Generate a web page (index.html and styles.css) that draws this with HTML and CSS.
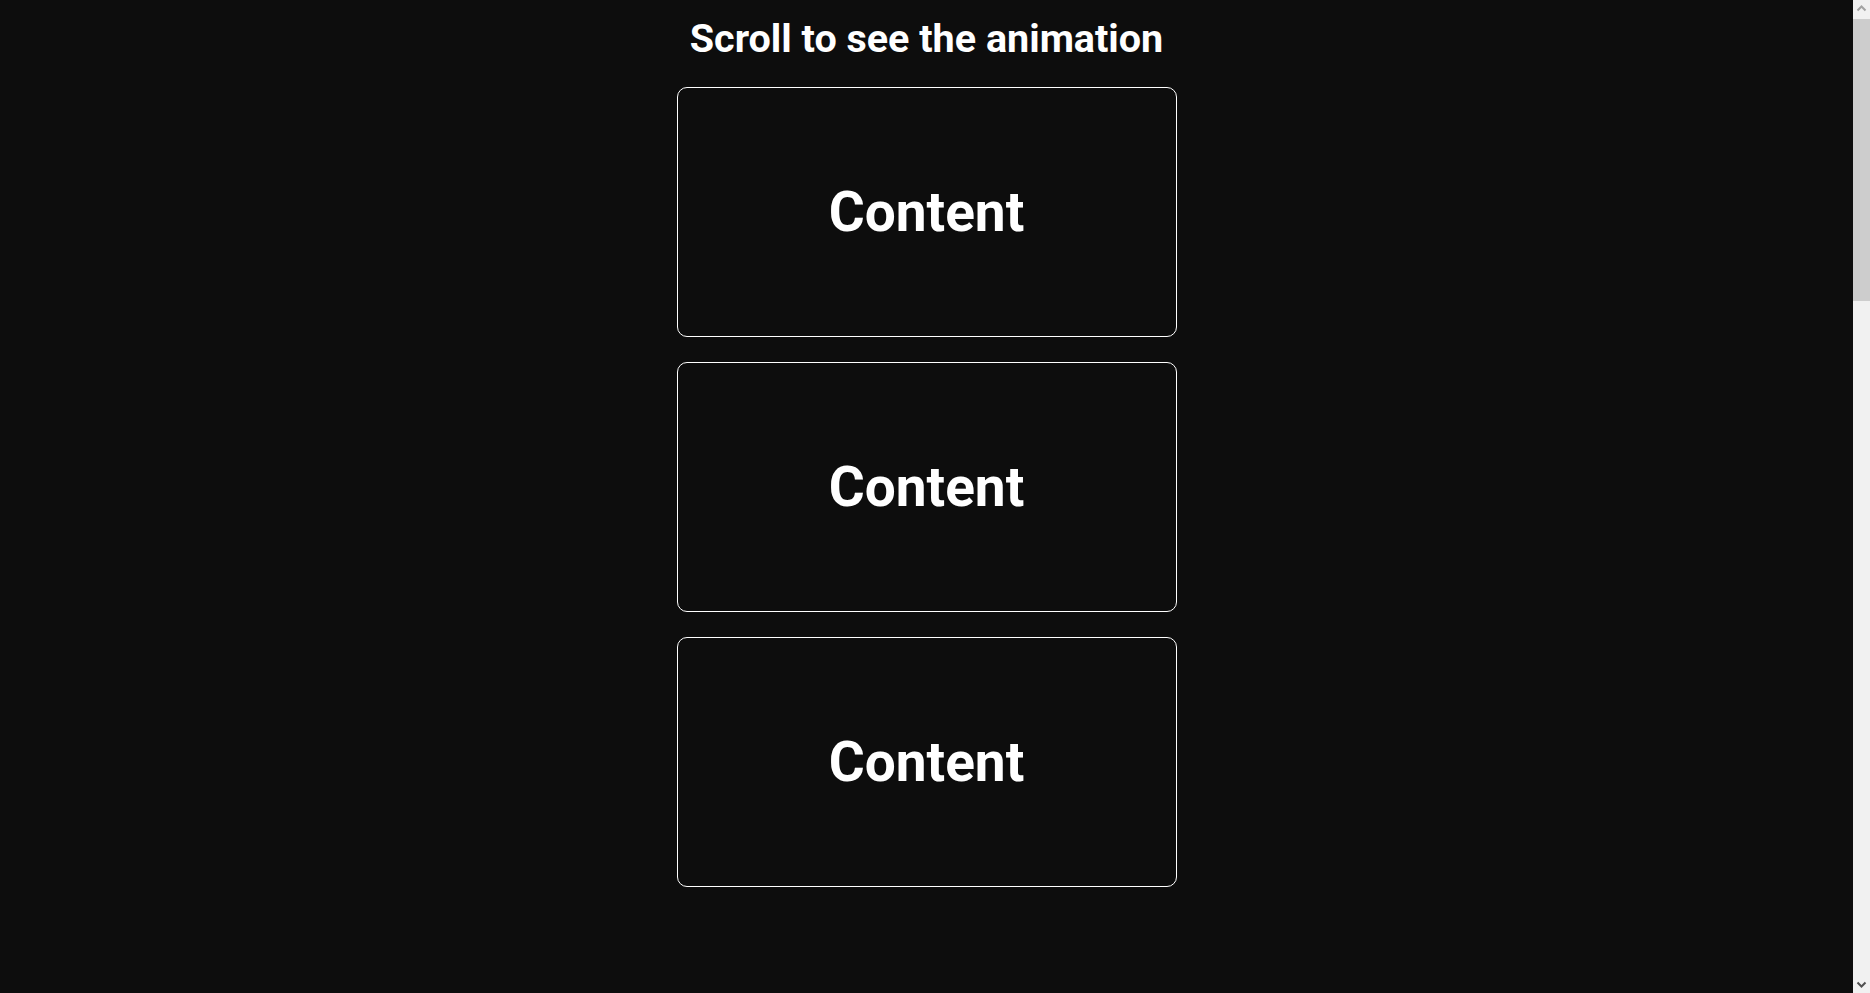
FILE: index.html
```html
<!DOCTYPE html>
<html lang="en">
<head>
<meta charset="utf-8">
<title>Scroll animation</title>
<link rel="stylesheet" href="styles.css">
</head>
<body>
<main class="page">
  <h1 class="title">Scroll to see the animation</h1>
  <section class="cards">
    <div class="card"><span class="card-text">Content</span></div>
    <div class="card"><span class="card-text">Content</span></div>
    <div class="card"><span class="card-text">Content</span></div>
    <div class="card card-pending"></div>
    <div class="card card-pending"></div>
    <div class="card card-pending"></div>
    <div class="card card-pending"></div>
    <div class="card card-pending"></div>
    <div class="card card-pending"></div>
    <div class="card card-pending"></div>
    <div class="card card-pending"></div>
    <div class="card card-pending"></div>
  </section>
</main>
<div class="scrollbar" aria-hidden="true">
  <div class="sb-button">
    <svg width="17" height="17" viewBox="0 0 17 17"><path d="M4.5 10.5 L8.5 6.5 L12.5 10.5" fill="none" stroke="#a3a3a3" stroke-width="2"/></svg>
  </div>
  <div class="sb-track"><div class="sb-thumb"></div></div>
  <div class="sb-button">
    <svg width="17" height="17" viewBox="0 0 17 17"><path d="M4.5 6.5 L8.5 10.5 L12.5 6.5" fill="none" stroke="#505050" stroke-width="2"/></svg>
  </div>
</div>
</body>
</html>
```
FILE: styles.css
```css
html, body {
  margin: 0;
  padding: 0;
  background: #0d0d0d;
}

body {
  font-family: Roboto, "Liberation Sans", Arial, sans-serif;
  color: #ffffff;
  padding-right: 17px;
}

.page {
  display: flex;
  flex-direction: column;
  align-items: center;
  padding: 15px 0 16px;
}

.title {
  margin: 0 0 25px;
  font-size: 39.5px;
  font-weight: 700;
  line-height: 47px;
  text-align: center;
}

.cards {
  display: flex;
  flex-direction: column;
  gap: 25px;
}

.card {
  box-sizing: border-box;
  width: 500px;
  height: 250px;
  border: 1px solid #ffffff;
  border-radius: 10px;
  display: flex;
  align-items: center;
  justify-content: center;
}

.card-text {
  font-size: 55px;
  font-weight: 700;
}

.card-pending {
  opacity: 0;
  transform: translateY(40px);
}

/* browser scrollbar, drawn over the right edge */
.scrollbar {
  position: fixed;
  top: 0;
  right: 0;
  width: 17px;
  height: 100vh;
  background: #f1f1f1;
  display: flex;
  flex-direction: column;
}

.sb-button {
  height: 17px;
  flex: none;
  display: flex;
}

.sb-track {
  flex: 1;
  padding-top: 2px;
}

.sb-thumb {
  height: 282px;
  background: #cdcdcd;
}
```
